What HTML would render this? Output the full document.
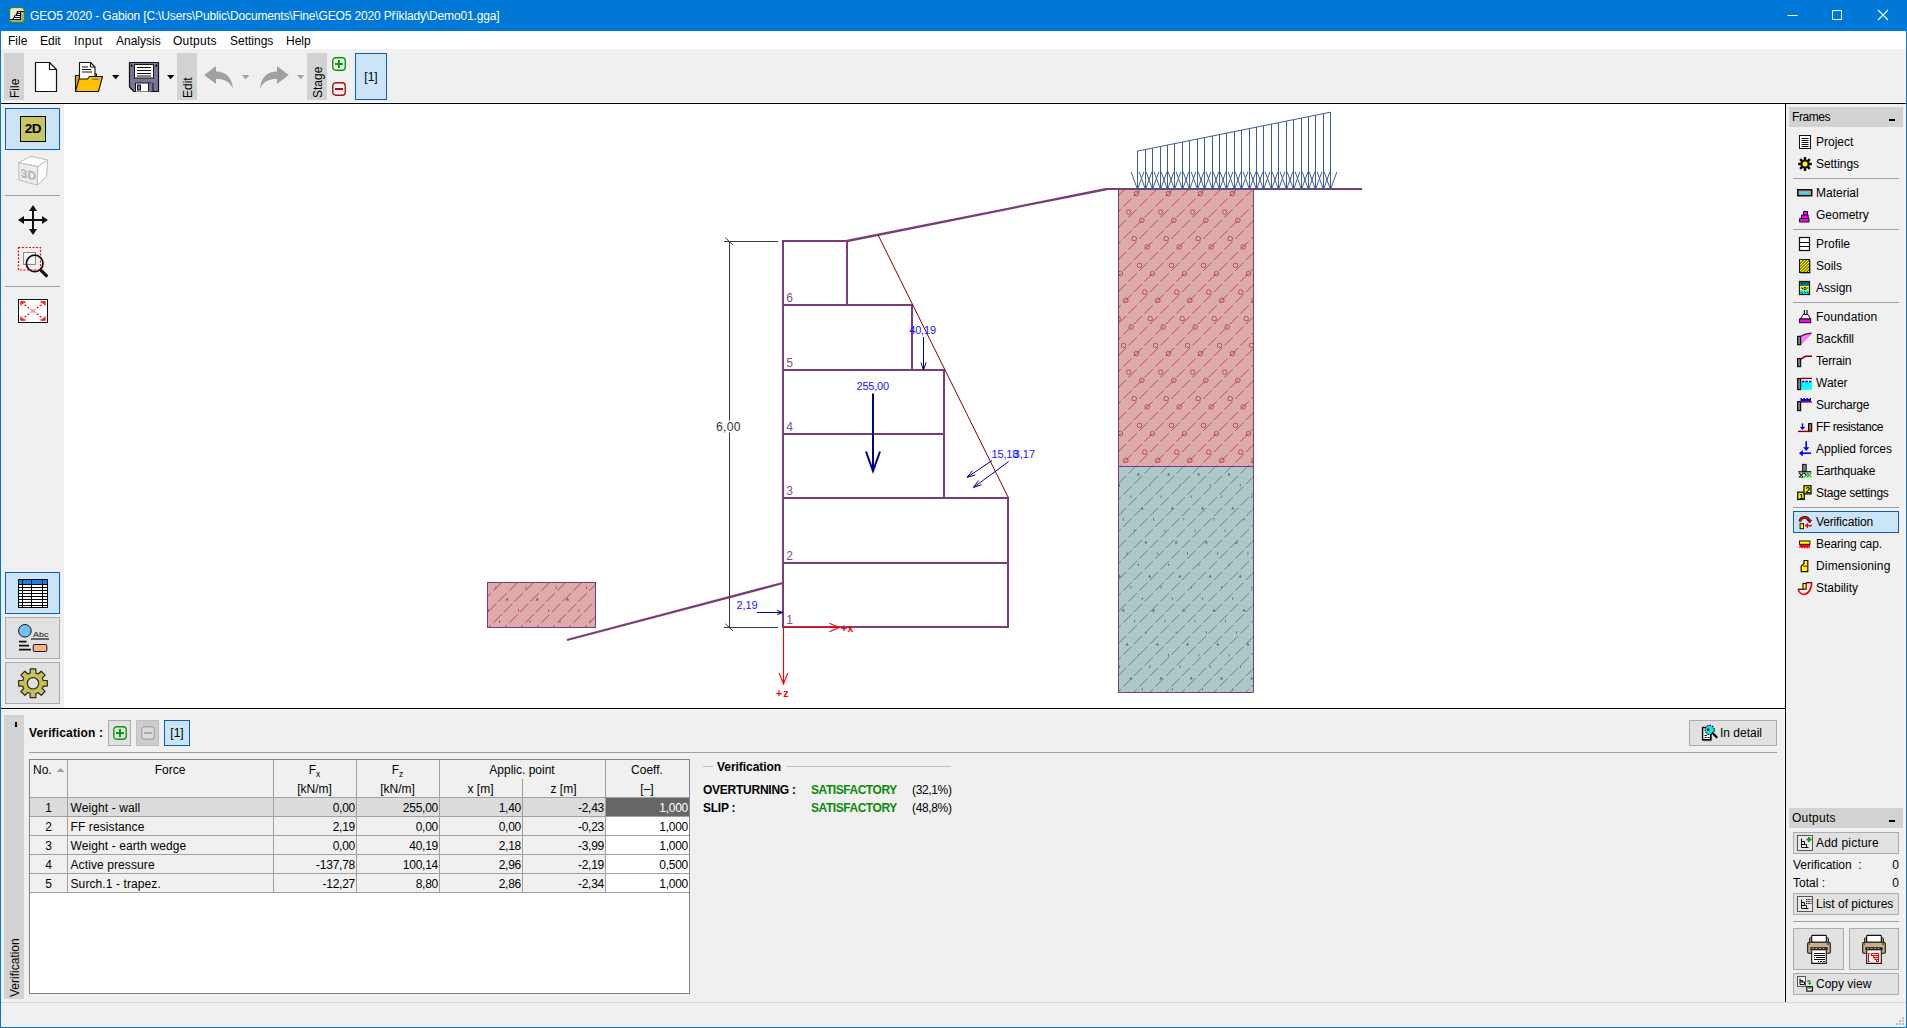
<!DOCTYPE html>
<html lang="en">
<head>
<meta charset="utf-8">
<title>GEO5 2020 - Gabion</title>
<style>
*{box-sizing:border-box;margin:0;padding:0}
html,body{width:1907px;height:1028px;overflow:hidden;background:#f0f0f0}
body{position:relative;font-family:"Liberation Sans",sans-serif;font-size:12px;color:#000;line-height:14px}
.a{position:absolute}
.t{position:absolute;white-space:nowrap;line-height:14px;height:14px}
.vstrip{position:absolute;background:#d2d2d2}
.vtxt{position:absolute;white-space:nowrap;transform-origin:0 0;transform:rotate(-90deg);line-height:14px;height:14px}
.btn{position:absolute;background:#e1e1e1;border:1px solid #adadad}
.sel{position:absolute;background:#cce4f7;border:1px solid #0f5fae}
.sep{position:absolute;height:1px;background:#a0a0a0}
.b{font-weight:bold}
svg{position:absolute;overflow:visible}
</style>
</head>
<body>
<!-- window frame -->
<div class="a" style="left:0;top:0;width:1907px;height:31px;background:#0078d7"></div>
<div class="a" style="left:0;top:31px;width:1907px;height:18px;background:#fff"></div>
<div class="a" style="left:0;top:103px;width:1907px;height:1px;background:#000"></div>
<div class="a" style="left:64px;top:104px;width:1721px;height:604px;background:#fff"></div>
<div class="a" style="left:0;top:708px;width:1786px;height:1px;background:#000"></div>
<div class="a" style="left:1785px;top:104px;width:1px;height:898px;background:#000"></div>
<div class="a" style="left:0;top:1002px;width:1907px;height:1px;background:#d7d7d7"></div>
<div class="a" style="left:0;top:0;width:1px;height:1028px;background:#0078d7"></div>
<div class="a" style="left:1906px;top:0;width:1px;height:1028px;background:#0078d7"></div>
<div class="a" style="left:0;top:1027px;width:1907px;height:1px;background:#0078d7"></div>

<div class="a" style="left:1px;top:102px;width:1905px;height:1px;background:#fbfbfb"></div>
<div class="a" style="left:1px;top:709px;width:1784px;height:1px;background:#fbfbfb"></div>
<div class="a" style="left:1784px;top:709px;width:1px;height:293px;background:#fbfbfb"></div>
<!-- title bar -->
<svg style="left:9px;top:7px" width="16" height="16" viewBox="0 0 16 16">
<rect x="0.500" y="0.500" width="15" height="15" rx="3.200" fill="#a9b263" stroke="#3f7a1c"/>
<path d="M1.300 3.500Q1.300 1.300 3.500 1.300H12.500Q14.200 1.300 14.600 4H8L4 12.200H1.300z" fill="#e9ebd8"/>
<path d="M8 4h7v1h-3v8H1v-1h3v-1.500h1v-2h2v-2h1z" fill="#000"/>
<path d="M9.200 5.500h1.800M8.200 7.500h2.800M6.200 9.500h4.800M5 11.500h6" stroke="#fff" stroke-width="1.100"/>
</svg>
<div class="t" style="left:30px;top:9px;color:#fff;letter-spacing:-0.15px">GEO5 2020 - Gabion [C:\Users\Public\Documents\Fine\GEO5 2020 Příklady\Demo01.gga]</div>
<svg style="left:1780px;top:0" width="127" height="31" viewBox="0 0 127 31">
<path d="M7.5 15.5h10" stroke="#fff" stroke-width="1" fill="none"/>
<rect x="52.5" y="10.5" width="9" height="9" stroke="#fff" stroke-width="1" fill="none"/>
<path d="M98 10l10 10M108 10l-10 10" stroke="#fff" stroke-width="1.1" fill="none"/>
</svg>

<!-- menu bar -->
<div class="t" style="left:8px;top:34px">File</div>
<div class="t" style="left:40px;top:34px">Edit</div>
<div class="t" style="left:74px;top:34px;letter-spacing:0.350px">Input</div>
<div class="t" style="left:116px;top:34px">Analysis</div>
<div class="t" style="left:173px;top:34px;letter-spacing:0.250px">Outputs</div>
<div class="t" style="left:230px;top:34px">Settings</div>
<div class="t" style="left:286px;top:34px">Help</div>
<!-- toolbar -->
<div class="vstrip" style="left:4px;top:53px;width:20px;height:47px"></div>
<div class="vtxt" style="left:7.600px;top:98px">File</div>
<div class="vstrip" style="left:177px;top:53px;width:20px;height:47px"></div>
<div class="vtxt" style="left:180.600px;top:98px">Edit</div>
<div class="vstrip" style="left:307px;top:53px;width:20px;height:47px"></div>
<div class="vtxt" style="left:310.500px;top:98px">Stage</div>
<!-- new -->
<svg style="left:34px;top:61px" width="25" height="32" viewBox="0 0 25 32">
<path d="M1.5 1.5h14l7 7v22h-21z" fill="#fff" stroke="#111" stroke-width="1.2" stroke-linejoin="round"/>
<path d="M15.5 1.5v7h7" fill="none" stroke="#111" stroke-width="1.2" stroke-linejoin="round"/>
</svg>
<!-- open -->
<svg style="left:74px;top:61px" width="30" height="32" viewBox="0 0 30 32">
<path d="M1.5 30.5v-16h4l1-1.5h16v4" fill="#e9a800" stroke="#111" stroke-width="1.1" stroke-linejoin="round"/>
<path d="M5.5 24v-22.500h11l4.500 4.500v14z" fill="#fff" stroke="#111" stroke-width="1.1" stroke-linejoin="round"/>
<path d="M16.500 1.500v4.500h4.500" fill="none" stroke="#111" stroke-width="1"/>
<path d="M8 6h6M8 8.500h9M8 11h10" stroke="#111" stroke-width="1.1"/>
<path d="M1.500 30.500l3.500-12.500h8.500l2-2.500h13l-4 15z" fill="#ffc000" stroke="#111" stroke-width="1.100" stroke-linejoin="round"/>
<rect x="18" y="17.500" width="6.500" height="1.600" fill="#7a7a9a"/>
</svg>

<svg style="left:111px;top:74px" width="10" height="6" viewBox="0 0 10 6"><path d="M1 1h7.400l-3.700 4.300z" fill="#000"/></svg>
<!-- save -->
<svg style="left:128px;top:61px" width="32" height="32" viewBox="0 0 32 32">
<path d="M1.500 1.500h29v29h-24.500l-4.500-4.500z" fill="#77769a" stroke="#111" stroke-width="1.200" stroke-linejoin="round"/>
<rect x="6.500" y="3.500" width="19" height="13.500" fill="#fff" stroke="#111" stroke-width="1"/>
<path d="M9 6.500h14M9 9.500h14M9 12.500h14M9 15h14" stroke="#111" stroke-width="1"/>
<rect x="3" y="3.500" width="1.500" height="2.500" fill="#111"/><rect x="27.500" y="3.500" width="1.500" height="2.500" fill="#111"/>
<path d="M7.500 30.500v-8.500h15.500v8.500" fill="#fff" stroke="#111" stroke-width="1"/>
<rect x="9.500" y="24" width="3" height="5" fill="#77769a" stroke="#111" stroke-width="1"/>
<path d="M20.500 22v8.500" stroke="#111" stroke-width="1"/>
<rect x="21" y="22.500" width="3.500" height="7.500" fill="#77769a"/>
<path d="M25 22v8.500" stroke="#111" stroke-width="1"/>
</svg>
<svg style="left:166px;top:74px" width="10" height="6" viewBox="0 0 10 6"><path d="M1 1h7.400l-3.700 4.300z" fill="#000"/></svg>
<!-- undo / redo -->
<svg style="left:203px;top:65px" width="32" height="26" viewBox="0 0 32 26">
<path d="M1.200 10 13 1v5.600c9 0 16 5 17 17.400c-3-7.500-8.500-10-17-10v5z" fill="#a0a0a0"/>
</svg>
<svg style="left:241px;top:74px" width="10" height="6" viewBox="0 0 10 6"><path d="M1 1h7.400l-3.700 4.300z" fill="#a0a0a0"/></svg>
<svg style="left:258px;top:65px" width="32" height="26" viewBox="0 0 32 26">
<path d="M30.800 10 19 1v5.600c-9 0-16 5-17 17.400c3-7.500 8.500-10 17-10v5z" fill="#a0a0a0"/>
</svg>
<svg style="left:296px;top:74px" width="10" height="6" viewBox="0 0 10 6"><path d="M1 1h7.400l-3.700 4.300z" fill="#a0a0a0"/></svg>
<!-- stage +/- -->
<svg style="left:332px;top:57px" width="14" height="14" viewBox="0 0 14 14">
<rect x="0.750" y="0.750" width="12.500" height="12.500" rx="3" fill="none" stroke="#0a9a0a" stroke-width="1.400"/>
<path d="M3 7h8M7 3v8" stroke="#0a9a0a" stroke-width="2"/>
</svg>
<svg style="left:332px;top:82px" width="14" height="14" viewBox="0 0 14 14">
<rect x="0.750" y="0.750" width="12.500" height="12.500" rx="3" fill="none" stroke="#a01414" stroke-width="1.400"/>
<path d="M3 7h8" stroke="#a01414" stroke-width="2"/>
</svg>
<div class="sel" style="left:355px;top:53px;width:32px;height:47px;border-width:1.500px"></div>
<div class="t" style="left:355px;top:70px;width:32px;text-align:center">[1]</div>
<!-- left tools -->
<div class="sel" style="left:5px;top:108px;width:55px;height:42px"></div>
<div class="a" style="left:20px;top:116px;width:26px;height:26px;background:#c8c862;border:1px solid #000"></div>
<div class="t b" style="left:20px;top:122px;width:26px;text-align:center;font-size:13.500px;letter-spacing:-0.300px">2D</div>
<svg style="left:14px;top:152px" width="38" height="38" viewBox="14 152 38 38">
<path d="M18.700 162.800 30.800 156.300 47.600 160 37.800 166.500z" fill="#fff" stroke="#bdbdbd" stroke-width="1" stroke-linejoin="round"/>
<path d="M37.800 166.500 47.600 160 46.700 176.300 37.300 185.200z" fill="#fff" stroke="#bdbdbd" stroke-width="1" stroke-linejoin="round"/>
<path d="M18.700 162.800 37.800 166.500 37.300 185.200 19.100 180z" fill="#ececec" stroke="#bdbdbd" stroke-width="1" stroke-linejoin="round"/>
<text x="20.800" y="178" font-size="12" font-weight="bold" fill="#b2b2b2" transform="translate(0,0) skewY(13) translate(0,-5.800)" font-family="Liberation Sans,sans-serif">3D</text>
</svg>
<div class="sep" style="left:5px;top:195px;width:55px"></div>
<svg style="left:18px;top:205px" width="30" height="30" viewBox="0 0 30 30">
<path d="M15 3v24M3 15h24" stroke="#111" stroke-width="2" fill="none"/>
<path d="M15 0l4 6h-8zM15 30l4-6h-8zM0 15l6-4v8zM30 15l-6-4v8z" fill="#111"/>
</svg>
<svg style="left:17px;top:246px" width="34" height="34" viewBox="17 246 34 34">
<rect x="23.500" y="252.500" width="12" height="12" fill="#f4f4f4" stroke="#8c8c8c" stroke-width="1"/>
<rect x="18.500" y="247.500" width="22" height="22.500" fill="none" stroke="#f00" stroke-width="1.200" stroke-dasharray="2 1.500"/>
<circle cx="34.700" cy="263.400" r="8.300" fill="none" stroke="#111" stroke-width="1.700"/>
<path d="M41 270.300 46.400 275.600" stroke="#111" stroke-width="3.200" stroke-linecap="round"/>
</svg>
<div class="sep" style="left:5px;top:286px;width:55px"></div>
<svg style="left:18px;top:299px" width="30" height="24" viewBox="0 0 30 24">
<rect x="0.500" y="0.500" width="29" height="23" fill="#fff" stroke="#111" stroke-width="1"/>
<path d="M3.500 3.500 13 10.600M26.500 3.500 17 10.600M3.500 20.500 13 13.400M26.500 20.500 17 13.400" stroke="#f00" stroke-width="1.200" stroke-dasharray="2.200 1.600" fill="none"/>
<path d="M3 6.500V3h4.500M27 6.500V3h-4.500M3 17.500V21h4.500M27 17.500V21h-4.500" stroke="#f00" stroke-width="1.300" fill="none"/>
<path d="M14 10.500v3M16 10.500v3" stroke="#f00" stroke-width="0.800"/>
</svg>
<!-- bottom-left buttons -->
<div class="sel" style="left:5px;top:572px;width:55px;height:42px"></div>
<svg style="left:18px;top:579px" width="30" height="29" viewBox="0 0 30 29" shape-rendering="crispEdges">
<rect x="0" y="0" width="30" height="29" fill="#000"/>
<rect x="1" y="1" width="28" height="27" fill="#fff"/>
<rect x="1" y="1" width="28" height="4" fill="#1284e8"/>
<path d="M0 5.500h30M0 8.500h30M0 11.500h30M0 14.500h30M0 17.500h30M0 20.500h30M0 23.500h30M0 26.500h30" stroke="#000" stroke-width="1"/>
<path d="M4.500 0v29M13.500 0v29M24.500 0v29" stroke="#000" stroke-width="1"/>
</svg>
<div class="btn" style="left:5px;top:617px;width:55px;height:42px"></div>
<svg style="left:16px;top:622px" width="36" height="32" viewBox="16 622 36 32">
<circle cx="24.900" cy="630.800" r="6.300" fill="#72c2fa" stroke="#111" stroke-width="1"/>
<text x="33" y="637" font-size="7.500" fill="#111" font-family="Liberation Sans,sans-serif" textLength="15.500" lengthAdjust="spacingAndGlyphs">Abc</text>
<path d="M31 639h18" stroke="#111" stroke-width="1.200"/>
<path d="M19 641.600h7.500M19 645.700h10M19 649.600h12" stroke="#111" stroke-width="1.700"/>
<rect x="33.300" y="644.500" width="13.500" height="7" rx="1" fill="#ffb27e" stroke="#111" stroke-width="1"/>
</svg>
<div class="btn" style="left:5px;top:662px;width:55px;height:42px"></div>
<svg style="left:5px;top:662px" width="55" height="42" viewBox="0 0 55 42">
<path d="M25.11 11.10L25.21 6.97L30.79 6.97L30.89 11.10L33.17 12.05L36.16 9.20L40.10 13.14L37.25 16.13L38.20 18.41L42.33 18.51L42.33 24.09L38.20 24.19L37.25 26.47L40.10 29.46L36.16 33.40L33.17 30.55L30.89 31.50L30.79 35.63L25.21 35.63L25.11 31.50L22.83 30.55L19.84 33.40L15.90 29.46L18.75 26.47L17.80 24.19L13.67 24.09L13.67 18.51L17.80 18.41L18.75 16.13L15.90 13.14L19.84 9.20L22.83 12.05Z" fill="#c3c355" stroke="#2a2a2a" stroke-width="1.200" stroke-linejoin="round"/>
<circle cx="28" cy="21.300" r="5.700" fill="#e1e1e1" stroke="#2a2a2a" stroke-width="1.200"/>
</svg>
<!-- canvas drawing -->
<svg style="left:64px;top:104px" width="1721" height="604" viewBox="64 104 1721 604" font-family="Liberation Sans,sans-serif">
<defs>
<clipPath id="cpink"><rect x="1118.5" y="190" width="135" height="276.5"/></clipPath>
<clipPath id="cteal"><rect x="1118.5" y="466.5" width="135" height="226"/></clipPath>
<clipPath id="cleg"><rect x="487.5" y="582.5" width="108" height="45"/></clipPath>
</defs>
<rect x="1118.5" y="189.5" width="135" height="277" fill="#ddabab"/>
<rect x="1118.5" y="466.5" width="135" height="226" fill="#aec8c8"/>
<g clip-path="url(#cpink)"><g stroke="#b84444" stroke-width="0.9" stroke-dasharray="11.8 3.28" fill="none"><line x1="813.1" y1="469.0" x2="1095.1" y2="187.0" stroke-dashoffset="6.35"/><line x1="829.1" y1="469.0" x2="1111.1" y2="187.0" stroke-dashoffset="6.35"/><line x1="845.1" y1="469.0" x2="1127.1" y2="187.0" stroke-dashoffset="6.35"/><line x1="861.1" y1="469.0" x2="1143.1" y2="187.0" stroke-dashoffset="6.35"/><line x1="877.1" y1="469.0" x2="1159.1" y2="187.0" stroke-dashoffset="6.35"/><line x1="893.1" y1="469.0" x2="1175.1" y2="187.0" stroke-dashoffset="6.35"/><line x1="909.1" y1="469.0" x2="1191.1" y2="187.0" stroke-dashoffset="6.35"/><line x1="925.1" y1="469.0" x2="1207.1" y2="187.0" stroke-dashoffset="6.35"/><line x1="941.1" y1="469.0" x2="1223.1" y2="187.0" stroke-dashoffset="6.35"/><line x1="957.1" y1="469.0" x2="1239.1" y2="187.0" stroke-dashoffset="6.35"/><line x1="973.1" y1="469.0" x2="1255.1" y2="187.0" stroke-dashoffset="6.35"/><line x1="989.1" y1="469.0" x2="1271.1" y2="187.0" stroke-dashoffset="6.35"/><line x1="1005.1" y1="469.0" x2="1287.1" y2="187.0" stroke-dashoffset="6.35"/><line x1="1021.1" y1="469.0" x2="1303.1" y2="187.0" stroke-dashoffset="6.35"/><line x1="1037.1" y1="469.0" x2="1319.1" y2="187.0" stroke-dashoffset="6.35"/><line x1="1053.1" y1="469.0" x2="1335.1" y2="187.0" stroke-dashoffset="6.35"/><line x1="1069.1" y1="469.0" x2="1351.1" y2="187.0" stroke-dashoffset="6.35"/><line x1="1085.1" y1="469.0" x2="1367.1" y2="187.0" stroke-dashoffset="6.35"/><line x1="1101.1" y1="469.0" x2="1383.1" y2="187.0" stroke-dashoffset="6.35"/><line x1="1117.1" y1="469.0" x2="1399.1" y2="187.0" stroke-dashoffset="6.35"/><line x1="1133.1" y1="469.0" x2="1415.1" y2="187.0" stroke-dashoffset="6.35"/><line x1="1149.1" y1="469.0" x2="1431.1" y2="187.0" stroke-dashoffset="6.35"/><line x1="1165.1" y1="469.0" x2="1447.1" y2="187.0" stroke-dashoffset="6.35"/><line x1="1181.1" y1="469.0" x2="1463.1" y2="187.0" stroke-dashoffset="6.35"/><line x1="1197.1" y1="469.0" x2="1479.1" y2="187.0" stroke-dashoffset="6.35"/><line x1="1213.1" y1="469.0" x2="1495.1" y2="187.0" stroke-dashoffset="6.35"/><line x1="1229.1" y1="469.0" x2="1511.1" y2="187.0" stroke-dashoffset="6.35"/><line x1="1245.1" y1="469.0" x2="1527.1" y2="187.0" stroke-dashoffset="6.35"/><line x1="1261.1" y1="469.0" x2="1543.1" y2="187.0" stroke-dashoffset="6.35"/><line x1="1277.1" y1="469.0" x2="1559.1" y2="187.0" stroke-dashoffset="6.35"/></g><g stroke="#b84444" stroke-width="0.900" fill="none"><circle cx="1136.5" cy="193.6" r="2.3"/><circle cx="1168.5" cy="193.6" r="2.3"/><circle cx="1200.5" cy="193.6" r="2.3"/><circle cx="1232.5" cy="193.6" r="2.3"/><circle cx="1141.8" cy="220.3" r="2.3"/><circle cx="1173.8" cy="220.3" r="2.3"/><circle cx="1205.8" cy="220.3" r="2.3"/><circle cx="1237.8" cy="220.3" r="2.3"/><circle cx="1115.2" cy="246.9" r="2.3"/><circle cx="1147.2" cy="246.9" r="2.3"/><circle cx="1179.2" cy="246.9" r="2.3"/><circle cx="1211.2" cy="246.9" r="2.3"/><circle cx="1243.2" cy="246.9" r="2.3"/><circle cx="1120.5" cy="273.6" r="2.3"/><circle cx="1152.5" cy="273.6" r="2.3"/><circle cx="1184.5" cy="273.6" r="2.3"/><circle cx="1216.5" cy="273.6" r="2.3"/><circle cx="1248.5" cy="273.6" r="2.3"/><circle cx="1125.8" cy="300.3" r="2.3"/><circle cx="1157.8" cy="300.3" r="2.3"/><circle cx="1189.8" cy="300.3" r="2.3"/><circle cx="1221.8" cy="300.3" r="2.3"/><circle cx="1253.8" cy="300.3" r="2.3"/><circle cx="1131.2" cy="326.9" r="2.3"/><circle cx="1163.2" cy="326.9" r="2.3"/><circle cx="1195.2" cy="326.9" r="2.3"/><circle cx="1227.2" cy="326.9" r="2.3"/><circle cx="1136.5" cy="353.6" r="2.3"/><circle cx="1168.5" cy="353.6" r="2.3"/><circle cx="1200.5" cy="353.6" r="2.3"/><circle cx="1232.5" cy="353.6" r="2.3"/><circle cx="1141.8" cy="380.3" r="2.3"/><circle cx="1173.8" cy="380.3" r="2.3"/><circle cx="1205.8" cy="380.3" r="2.3"/><circle cx="1237.8" cy="380.3" r="2.3"/><circle cx="1115.2" cy="406.9" r="2.3"/><circle cx="1147.2" cy="406.9" r="2.3"/><circle cx="1179.2" cy="406.9" r="2.3"/><circle cx="1211.2" cy="406.9" r="2.3"/><circle cx="1243.2" cy="406.9" r="2.3"/><circle cx="1120.5" cy="433.6" r="2.3"/><circle cx="1152.5" cy="433.6" r="2.3"/><circle cx="1184.5" cy="433.6" r="2.3"/><circle cx="1216.5" cy="433.6" r="2.3"/><circle cx="1248.5" cy="433.6" r="2.3"/><circle cx="1125.8" cy="460.3" r="2.3"/><circle cx="1157.8" cy="460.3" r="2.3"/><circle cx="1189.8" cy="460.3" r="2.3"/><circle cx="1221.8" cy="460.3" r="2.3"/><circle cx="1253.8" cy="460.3" r="2.3"/><circle cx="1128.8" cy="212.1" r="2.3"/><circle cx="1160.8" cy="212.1" r="2.3"/><circle cx="1192.8" cy="212.1" r="2.3"/><circle cx="1224.8" cy="212.1" r="2.3"/><circle cx="1256.8" cy="212.1" r="2.3"/><circle cx="1134.2" cy="238.7" r="2.3"/><circle cx="1166.2" cy="238.7" r="2.3"/><circle cx="1198.2" cy="238.7" r="2.3"/><circle cx="1230.2" cy="238.7" r="2.3"/><circle cx="1139.5" cy="265.4" r="2.3"/><circle cx="1171.5" cy="265.4" r="2.3"/><circle cx="1203.5" cy="265.4" r="2.3"/><circle cx="1235.5" cy="265.4" r="2.3"/><circle cx="1144.8" cy="292.1" r="2.3"/><circle cx="1176.8" cy="292.1" r="2.3"/><circle cx="1208.8" cy="292.1" r="2.3"/><circle cx="1240.8" cy="292.1" r="2.3"/><circle cx="1118.2" cy="318.7" r="2.3"/><circle cx="1150.2" cy="318.7" r="2.3"/><circle cx="1182.2" cy="318.7" r="2.3"/><circle cx="1214.2" cy="318.7" r="2.3"/><circle cx="1246.2" cy="318.7" r="2.3"/><circle cx="1123.5" cy="345.4" r="2.3"/><circle cx="1155.5" cy="345.4" r="2.3"/><circle cx="1187.5" cy="345.4" r="2.3"/><circle cx="1219.5" cy="345.4" r="2.3"/><circle cx="1251.5" cy="345.4" r="2.3"/><circle cx="1128.8" cy="372.1" r="2.3"/><circle cx="1160.8" cy="372.1" r="2.3"/><circle cx="1192.8" cy="372.1" r="2.3"/><circle cx="1224.8" cy="372.1" r="2.3"/><circle cx="1256.8" cy="372.1" r="2.3"/><circle cx="1134.2" cy="398.7" r="2.3"/><circle cx="1166.2" cy="398.7" r="2.3"/><circle cx="1198.2" cy="398.7" r="2.3"/><circle cx="1230.2" cy="398.7" r="2.3"/><circle cx="1139.5" cy="425.4" r="2.3"/><circle cx="1171.5" cy="425.4" r="2.3"/><circle cx="1203.5" cy="425.4" r="2.3"/><circle cx="1235.5" cy="425.4" r="2.3"/><circle cx="1144.8" cy="452.1" r="2.3"/><circle cx="1176.8" cy="452.1" r="2.3"/><circle cx="1208.8" cy="452.1" r="2.3"/><circle cx="1240.8" cy="452.1" r="2.3"/></g></g>
<g clip-path="url(#cteal)"><g stroke="#448484" stroke-width="0.9" stroke-dasharray="11.8 3.28" fill="none"><line x1="859.1" y1="695.0" x2="1090.1" y2="464.0" stroke-dashoffset="3.42"/><line x1="875.1" y1="695.0" x2="1106.1" y2="464.0" stroke-dashoffset="3.42"/><line x1="891.1" y1="695.0" x2="1122.1" y2="464.0" stroke-dashoffset="3.42"/><line x1="907.1" y1="695.0" x2="1138.1" y2="464.0" stroke-dashoffset="3.42"/><line x1="923.1" y1="695.0" x2="1154.1" y2="464.0" stroke-dashoffset="3.42"/><line x1="939.1" y1="695.0" x2="1170.1" y2="464.0" stroke-dashoffset="3.42"/><line x1="955.1" y1="695.0" x2="1186.1" y2="464.0" stroke-dashoffset="3.42"/><line x1="971.1" y1="695.0" x2="1202.1" y2="464.0" stroke-dashoffset="3.42"/><line x1="987.1" y1="695.0" x2="1218.1" y2="464.0" stroke-dashoffset="3.42"/><line x1="1003.1" y1="695.0" x2="1234.1" y2="464.0" stroke-dashoffset="3.42"/><line x1="1019.1" y1="695.0" x2="1250.1" y2="464.0" stroke-dashoffset="3.42"/><line x1="1035.1" y1="695.0" x2="1266.1" y2="464.0" stroke-dashoffset="3.42"/><line x1="1051.1" y1="695.0" x2="1282.1" y2="464.0" stroke-dashoffset="3.42"/><line x1="1067.1" y1="695.0" x2="1298.1" y2="464.0" stroke-dashoffset="3.42"/><line x1="1083.1" y1="695.0" x2="1314.1" y2="464.0" stroke-dashoffset="3.42"/><line x1="1099.1" y1="695.0" x2="1330.1" y2="464.0" stroke-dashoffset="3.42"/><line x1="1115.1" y1="695.0" x2="1346.1" y2="464.0" stroke-dashoffset="3.42"/><line x1="1131.1" y1="695.0" x2="1362.1" y2="464.0" stroke-dashoffset="3.42"/><line x1="1147.1" y1="695.0" x2="1378.1" y2="464.0" stroke-dashoffset="3.42"/><line x1="1163.1" y1="695.0" x2="1394.1" y2="464.0" stroke-dashoffset="3.42"/><line x1="1179.1" y1="695.0" x2="1410.1" y2="464.0" stroke-dashoffset="3.42"/><line x1="1195.1" y1="695.0" x2="1426.1" y2="464.0" stroke-dashoffset="3.42"/><line x1="1211.1" y1="695.0" x2="1442.1" y2="464.0" stroke-dashoffset="3.42"/><line x1="1227.1" y1="695.0" x2="1458.1" y2="464.0" stroke-dashoffset="3.42"/><line x1="1243.1" y1="695.0" x2="1474.1" y2="464.0" stroke-dashoffset="3.42"/><line x1="1259.1" y1="695.0" x2="1490.1" y2="464.0" stroke-dashoffset="3.42"/><line x1="1275.1" y1="695.0" x2="1506.1" y2="464.0" stroke-dashoffset="3.42"/></g><path d="M1119.5 484.2v2.4M1149.7 484.2v2.4M1179.9 484.2v2.4M1210.1 484.2v2.4M1240.3 484.2v2.4M1130.8 495.5v2.4M1161.0 495.5v2.4M1191.2 495.5v2.4M1221.4 495.5v2.4M1251.6 495.5v2.4M1123.3 518.2v2.4M1153.5 518.2v2.4M1183.7 518.2v2.4M1213.9 518.2v2.4M1244.1 518.2v2.4M1134.6 529.5v2.4M1164.8 529.5v2.4M1195.0 529.5v2.4M1225.2 529.5v2.4M1255.4 529.5v2.4M1127.1 552.2v2.4M1157.3 552.2v2.4M1187.5 552.2v2.4M1217.7 552.2v2.4M1247.9 552.2v2.4M1138.4 563.5v2.4M1168.6 563.5v2.4M1198.8 563.5v2.4M1229.0 563.5v2.4M1130.9 586.2v2.4M1161.1 586.2v2.4M1191.3 586.2v2.4M1221.5 586.2v2.4M1251.7 586.2v2.4M1142.2 597.5v2.4M1172.4 597.5v2.4M1202.6 597.5v2.4M1232.8 597.5v2.4M1134.7 620.1v2.4M1164.9 620.1v2.4M1195.1 620.1v2.4M1225.3 620.1v2.4M1255.5 620.1v2.4M1115.8 631.5v2.4M1146.0 631.5v2.4M1176.2 631.5v2.4M1206.4 631.5v2.4M1236.6 631.5v2.4M1138.4 654.1v2.4M1168.6 654.1v2.4M1198.8 654.1v2.4M1229.0 654.1v2.4M1119.6 665.5v2.4M1149.8 665.5v2.4M1180.0 665.5v2.4M1210.2 665.5v2.4M1240.4 665.5v2.4M1142.2 688.1v2.4M1172.4 688.1v2.4M1202.6 688.1v2.4M1232.8 688.1v2.4" stroke="#448484" stroke-width="1" fill="none"/><path d="M1136.8 475.5h3.2l-1.6 -3zM1167.0 475.5h3.2l-1.6 -3zM1197.2 475.5h3.2l-1.6 -3zM1227.4 475.5h3.2l-1.6 -3zM1140.6 509.4h3.2l-1.6 -3zM1170.8 509.4h3.2l-1.6 -3zM1201.0 509.4h3.2l-1.6 -3zM1231.2 509.4h3.2l-1.6 -3zM1114.1 543.4h3.2l-1.6 -3zM1144.3 543.4h3.2l-1.6 -3zM1174.5 543.4h3.2l-1.6 -3zM1204.7 543.4h3.2l-1.6 -3zM1234.9 543.4h3.2l-1.6 -3zM1117.9 577.4h3.2l-1.6 -3zM1148.1 577.4h3.2l-1.6 -3zM1178.3 577.4h3.2l-1.6 -3zM1208.5 577.4h3.2l-1.6 -3zM1238.7 577.4h3.2l-1.6 -3zM1121.7 611.4h3.2l-1.6 -3zM1151.9 611.4h3.2l-1.6 -3zM1182.1 611.4h3.2l-1.6 -3zM1212.3 611.4h3.2l-1.6 -3zM1242.5 611.4h3.2l-1.6 -3zM1125.5 645.4h3.2l-1.6 -3zM1155.7 645.4h3.2l-1.6 -3zM1185.9 645.4h3.2l-1.6 -3zM1216.1 645.4h3.2l-1.6 -3zM1246.3 645.4h3.2l-1.6 -3zM1129.3 679.4h3.2l-1.6 -3zM1159.5 679.4h3.2l-1.6 -3zM1189.7 679.4h3.2l-1.6 -3zM1219.9 679.4h3.2l-1.6 -3zM1250.1 679.4h3.2l-1.6 -3z" fill="#448484" stroke="none"/></g>
<path d="M1118.5 189.5V692.5H1253.5V189.5M1118.5 466.5H1253.5" fill="none" stroke="#7a3d7c" stroke-width="1"/>
<rect x="487.5" y="582.5" width="108" height="45" fill="#ddabab"/>
<g clip-path="url(#cleg)"><g stroke="#b84444" stroke-width="0.9" stroke-dasharray="11.8 3.28" fill="none"><line x1="422.1" y1="630.0" x2="472.1" y2="580.0" stroke-dashoffset="4.86"/><line x1="438.1" y1="630.0" x2="488.1" y2="580.0" stroke-dashoffset="4.86"/><line x1="454.1" y1="630.0" x2="504.1" y2="580.0" stroke-dashoffset="4.86"/><line x1="470.1" y1="630.0" x2="520.1" y2="580.0" stroke-dashoffset="4.86"/><line x1="486.1" y1="630.0" x2="536.1" y2="580.0" stroke-dashoffset="4.86"/><line x1="502.1" y1="630.0" x2="552.1" y2="580.0" stroke-dashoffset="4.86"/><line x1="518.1" y1="630.0" x2="568.1" y2="580.0" stroke-dashoffset="4.86"/><line x1="534.1" y1="630.0" x2="584.1" y2="580.0" stroke-dashoffset="4.86"/><line x1="550.1" y1="630.0" x2="600.1" y2="580.0" stroke-dashoffset="4.86"/><line x1="566.1" y1="630.0" x2="616.1" y2="580.0" stroke-dashoffset="4.86"/><line x1="582.1" y1="630.0" x2="632.1" y2="580.0" stroke-dashoffset="4.86"/><line x1="598.1" y1="630.0" x2="648.1" y2="580.0" stroke-dashoffset="4.86"/><line x1="614.1" y1="630.0" x2="664.1" y2="580.0" stroke-dashoffset="4.86"/></g><path d="M495.8 586.5v2.4M526.0 586.5v2.4M556.2 586.5v2.4M586.4 586.5v2.4M488.3 609.2v2.4M518.5 609.2v2.4M548.7 609.2v2.4M578.9 609.2v2.4M499.6 620.5v2.4M529.8 620.5v2.4M560.0 620.5v2.4M590.2 620.5v2.4" stroke="#b84444" stroke-width="1" fill="none"/><path d="M505.5 600.4h3.2l-1.6 -3zM535.7 600.4h3.2l-1.6 -3zM565.9 600.4h3.2l-1.6 -3zM596.1 600.4h3.2l-1.6 -3z" fill="#b84444" stroke="none"/></g>
<rect x="487.5" y="582.5" width="108" height="45" fill="none" stroke="#7a3d7c" stroke-width="1"/>
<path d="M567 640 783 583" stroke="#7a3d7c" stroke-width="2.300" fill="none"/>
<path d="M847 241 1107 189" stroke="#7a3d7c" stroke-width="2.300" fill="none"/><path d="M1106 189H1362" stroke="#7a3d7c" stroke-width="2" fill="none"/>
<path d="M1137.5 151.1V189.5M1145.5 149.6V189.5M1152.5 148.1V189.5M1160.5 146.6V189.5M1167.5 145.1V189.5M1174.5 143.6V189.5M1182.5 142.1V189.5M1189.5 140.6V189.5M1197.5 139.1V189.5M1204.5 137.6V189.5M1212.5 136.1V189.5M1219.5 134.6V189.5M1226.5 133.1V189.5M1234.5 131.7V189.5M1241.5 130.2V189.5M1249.5 128.7V189.5M1256.5 127.2V189.5M1263.5 125.7V189.5M1271.5 124.2V189.5M1278.5 122.7V189.5M1286.5 121.2V189.5M1293.5 119.7V189.5M1301.5 118.2V189.5M1308.5 116.7V189.5M1315.5 115.2V189.5M1323.5 113.7V189.5M1330.5 112.2V189.5M1137.5 189.5H1330.5" stroke="#3f5c96" stroke-width="1" fill="none" shape-rendering="crispEdges"/>
<path d="M1131.10 171.80L1137.50 189.5L1143.90 171.80M1139.10 171.80L1145.50 189.5L1151.90 171.80M1146.10 171.80L1152.50 189.5L1158.90 171.80M1154.10 171.80L1160.50 189.5L1166.90 171.80M1161.10 171.80L1167.50 189.5L1173.90 171.80M1168.10 171.80L1174.50 189.5L1180.90 171.80M1176.10 171.80L1182.50 189.5L1188.90 171.80M1183.10 171.80L1189.50 189.5L1195.90 171.80M1191.10 171.80L1197.50 189.5L1203.90 171.80M1198.10 171.80L1204.50 189.5L1210.90 171.80M1206.10 171.80L1212.50 189.5L1218.90 171.80M1213.10 171.80L1219.50 189.5L1225.90 171.80M1220.10 171.80L1226.50 189.5L1232.90 171.80M1228.10 171.80L1234.50 189.5L1240.90 171.80M1235.10 171.80L1241.50 189.5L1247.90 171.80M1243.10 171.80L1249.50 189.5L1255.90 171.80M1250.10 171.80L1256.50 189.5L1262.90 171.80M1257.10 171.80L1263.50 189.5L1269.90 171.80M1265.10 171.80L1271.50 189.5L1277.90 171.80M1272.10 171.80L1278.50 189.5L1284.90 171.80M1280.10 171.80L1286.50 189.5L1292.90 171.80M1287.10 171.80L1293.50 189.5L1299.90 171.80M1295.10 171.80L1301.50 189.5L1307.90 171.80M1302.10 171.80L1308.50 189.5L1314.90 171.80M1309.10 171.80L1315.50 189.5L1321.90 171.80M1317.10 171.80L1323.50 189.5L1329.90 171.80M1324.10 171.80L1330.50 189.5L1336.90 171.80M1137.5 151.1L1330.5 112.2" stroke="#3f5c96" stroke-width="1" fill="none"/>
<path d="M783 241.0H847V305.0H783ZM783 305.0H912V370.0H783ZM783 370.0H944V434.0H783ZM783 434.0H944V498.0H783ZM783 498.0H1008V563.0H783ZM783 563.0H1008V627.0H783Z" stroke="#7a3d7c" stroke-width="2" fill="none" stroke-linejoin="miter"/>
<text x="786.3" y="301.8" font-size="12" fill="#7d4f8e">6</text>
<text x="786.3" y="366.8" font-size="12" fill="#7d4f8e">5</text>
<text x="786.3" y="430.8" font-size="12" fill="#7d4f8e">4</text>
<text x="786.3" y="494.8" font-size="12" fill="#7d4f8e">3</text>
<text x="786.3" y="559.8" font-size="12" fill="#7d4f8e">2</text>
<text x="786.3" y="623.8" font-size="12" fill="#7d4f8e">1</text>
<path d="M878 234.8 1008.5 498" stroke="#800000" stroke-width="1" fill="none"/>
<path d="M724 241.5H778M724 627.5H778M729.5 241.5V627.5M725.3 237.800l7.600 7M725.300 623.800l7.600 7" stroke="#3a3a3a" stroke-width="1" fill="none"/>
<rect x="715" y="420.500" width="27" height="12" fill="#fff"/>
<text x="716" y="431" font-size="12.200" fill="#333" textLength="24.500" lengthAdjust="spacing">6,00</text>
<path d="M783 627.500H840M829.500 623.200l9.700 4.300-9.700 4.300M783.500 627V684M779.100 673l4.400 11 4.400-11" stroke="#f00" stroke-width="1.100" fill="none"/>
<text x="841" y="632" font-size="10.500" font-weight="bold" fill="#f00" letter-spacing="0.300">+x</text>
<text x="776" y="696.500" font-size="10.500" font-weight="bold" fill="#f00" letter-spacing="1">+z</text>
<path d="M873 393.500V470M866 451.500 873 471 880 451.500" stroke="#000080" stroke-width="2" fill="none"/>
<path d="M923.500 337V370M921 362.500 923.500 370 926 362.500" stroke="#000080" stroke-width="1" fill="none"/>
<path d="M992 460.6L967.2 477.3M972.4 470.7L967.2 477.3L975.3 475.0M1008.6 461.6L973.5 487.4M978.4 480.6L973.5 487.4L981.5 484.8M757 612.5L783 612.5M777.0 614.5L783 612.5L777.0 610.5" stroke="#000080" stroke-width="1" fill="none"/>
<text x="856.6" y="389.9" font-size="11" fill="#1414ff" textLength="32.4" lengthAdjust="spacing">255,00</text>
<text x="909.3" y="333.7" font-size="11" fill="#1414ff" textLength="26.7" lengthAdjust="spacing">40,19</text>
<text x="991.6" y="457.5" font-size="11" fill="#1414ff" textLength="26.7" lengthAdjust="spacing">15,18</text>
<text x="1013.8" y="457.5" font-size="11" fill="#1414ff" textLength="21.2" lengthAdjust="spacing">3,17</text>
<text x="736.5" y="609" font-size="11" fill="#1414ff" textLength="21.2" lengthAdjust="spacing">2,19</text>
</svg>
<!-- bottom panel -->
<div class="vstrip" style="left:4px;top:715px;width:20px;height:284px"></div>
<div class="a" style="left:15px;top:722px;width:2px;height:5px;background:#000"></div>
<div class="vtxt" style="left:7.600px;top:996.500px">Verification</div>
<div class="t b" style="left:29px;top:726px;letter-spacing:0.150px">Verification :</div>
<div class="btn" style="left:108px;top:720px;width:23px;height:26px"></div>
<svg style="left:113px;top:726px" width="14" height="14" viewBox="0 0 14 14"><rect x="0.75" y="0.75" width="12.5" height="12.5" rx="3" fill="none" stroke="#0a9a0a" stroke-width="1.300"/><path d="M3 7h8M7 3v8" stroke="#0a9a0a" stroke-width="2"/></svg>
<div class="a" style="left:136px;top:720px;width:23px;height:26px;background:#cccccc;border:1px solid #bfbfbf"></div>
<svg style="left:141px;top:726px" width="14" height="14" viewBox="0 0 14 14"><rect x="0.75" y="0.75" width="12.5" height="12.5" rx="3" fill="#dcdcdc" stroke="#aaaaaa" stroke-width="1.4"/><path d="M3 7h8" stroke="#aaaaaa" stroke-width="2"/></svg>
<div class="sel" style="left:164px;top:720px;width:26px;height:26px"></div>
<div class="t" style="left:164px;top:726px;width:26px;text-align:center">[1]</div>
<div class="sep" style="left:29px;top:752px;width:1748px"></div>
<div class="btn" style="left:1689px;top:720px;width:88px;height:26px"></div>
<svg style="left:1701px;top:724px" width="18" height="18" viewBox="0 0 18 18">
<path d="M2.500 16.700h8v-11" fill="none" stroke="#777" stroke-width="1"/>
<path d="M1.600 3.500h8v12.300h-8z" fill="#fff" stroke="#000" stroke-width="1.400"/>
<path d="M3.500 11.500h2.500M3.500 13.500h2M6.500 13.500h2" stroke="#000" stroke-width="1"/>
<circle cx="8.700" cy="6" r="4.600" fill="#00f0f8" stroke="#000" stroke-width="1.100" stroke-dasharray="1.600 1"/>
<rect x="6" y="4.600" width="2.300" height="2.300" fill="#000"/>
<path d="M8.600 3.500v4.500" stroke="#888" stroke-width="0.800"/>
<path d="M11.800 9.300 15.400 12.900" stroke="#000" stroke-width="2.200" stroke-linecap="square"/>
</svg>
<div class="t" style="left:1720px;top:726px">In detail</div>
<div class="a" style="left:29px;top:759px;width:661px;height:235px;background:#fff;border:1px solid #828282"></div>
<div class="a" style="left:30px;top:760px;width:659px;height:37px;background:#f0f0f0"></div>
<div class="a" style="left:30px;top:798px;width:575px;height:18px;background:#dcdcdc"></div>
<div class="a" style="left:30px;top:817px;width:575px;height:18px;background:#f0f0f0"></div>
<div class="a" style="left:30px;top:836px;width:575px;height:18px;background:#f0f0f0"></div>
<div class="a" style="left:30px;top:855px;width:575px;height:18px;background:#f0f0f0"></div>
<div class="a" style="left:30px;top:874px;width:575px;height:18px;background:#f0f0f0"></div>
<div class="a" style="left:606px;top:798px;width:83px;height:18px;background:#666"></div>
<div class="a" style="left:30px;top:797px;width:659px;height:1px;background:#a0a0a0"></div>
<div class="a" style="left:30px;top:816px;width:659px;height:1px;background:#a0a0a0"></div>
<div class="a" style="left:30px;top:835px;width:659px;height:1px;background:#a0a0a0"></div>
<div class="a" style="left:30px;top:854px;width:659px;height:1px;background:#a0a0a0"></div>
<div class="a" style="left:30px;top:873px;width:659px;height:1px;background:#a0a0a0"></div>
<div class="a" style="left:30px;top:892px;width:659px;height:1px;background:#a0a0a0"></div>
<div class="a" style="left:67px;top:760px;width:1px;height:132px;background:#a0a0a0"></div>
<div class="a" style="left:273px;top:760px;width:1px;height:132px;background:#a0a0a0"></div>
<div class="a" style="left:356px;top:760px;width:1px;height:132px;background:#a0a0a0"></div>
<div class="a" style="left:439px;top:760px;width:1px;height:132px;background:#a0a0a0"></div>
<div class="a" style="left:522px;top:779px;width:1px;height:113px;background:#a0a0a0"></div>
<div class="a" style="left:605px;top:760px;width:1px;height:132px;background:#a0a0a0"></div>
<div class="t" style="left:33px;top:763px">No.</div>
<svg style="left:56px;top:767px" width="9" height="6" viewBox="0 0 9 6"><path d="M0.500 5 4.500 1 8.500 5z" fill="#a0a0a0"/></svg>
<div class="t" style="left:67px;top:763px;width:206px;text-align:center;">Force</div>
<div class="t" style="left:273px;top:763px;width:83px;text-align:center;">F<span style="font-size:8.500px;position:relative;top:2.500px">x</span></div>
<div class="t" style="left:356px;top:763px;width:83px;text-align:center;">F<span style="font-size:8.500px;position:relative;top:2.500px">z</span></div>
<div class="t" style="left:439px;top:763px;width:166px;text-align:center;">Applic. point</div>
<div class="t" style="left:605px;top:763px;width:84px;text-align:center;">Coeff.</div>
<div class="t" style="left:273px;top:782px;width:83px;text-align:center;">[kN/m]</div>
<div class="t" style="left:356px;top:782px;width:83px;text-align:center;">[kN/m]</div>
<div class="t" style="left:439px;top:782px;width:83px;text-align:center;">x [m]</div>
<div class="t" style="left:522px;top:782px;width:83px;text-align:center;">z [m]</div>
<div class="t" style="left:605px;top:782px;width:84px;text-align:center;">[–]</div>
<div class="t" style="left:30px;width:37px;text-align:center;top:799px;height:18px;line-height:19px">1</div>
<div class="t" style="left:70.500px;letter-spacing:0.100px;top:799px;height:18px;line-height:19px">Weight - wall</div>
<div class="t" style="left:274px;width:81px;text-align:right;letter-spacing:-0.250px;top:799px;height:18px;line-height:19px">0,00</div>
<div class="t" style="left:357px;width:81px;text-align:right;letter-spacing:-0.250px;top:799px;height:18px;line-height:19px">255,00</div>
<div class="t" style="left:440px;width:81px;text-align:right;letter-spacing:-0.250px;top:799px;height:18px;line-height:19px">1,40</div>
<div class="t" style="left:523px;width:81px;text-align:right;letter-spacing:-0.250px;top:799px;height:18px;line-height:19px">-2,43</div>
<div class="t" style="left:606px;width:82px;text-align:right;letter-spacing:-0.250px;color:#fff;top:799px;height:18px;line-height:19px">1,000</div>
<div class="t" style="left:30px;width:37px;text-align:center;top:818px;height:18px;line-height:19px">2</div>
<div class="t" style="left:70.500px;letter-spacing:0.100px;top:818px;height:18px;line-height:19px">FF resistance</div>
<div class="t" style="left:274px;width:81px;text-align:right;letter-spacing:-0.250px;top:818px;height:18px;line-height:19px">2,19</div>
<div class="t" style="left:357px;width:81px;text-align:right;letter-spacing:-0.250px;top:818px;height:18px;line-height:19px">0,00</div>
<div class="t" style="left:440px;width:81px;text-align:right;letter-spacing:-0.250px;top:818px;height:18px;line-height:19px">0,00</div>
<div class="t" style="left:523px;width:81px;text-align:right;letter-spacing:-0.250px;top:818px;height:18px;line-height:19px">-0,23</div>
<div class="t" style="left:606px;width:82px;text-align:right;letter-spacing:-0.250px;top:818px;height:18px;line-height:19px">1,000</div>
<div class="t" style="left:30px;width:37px;text-align:center;top:837px;height:18px;line-height:19px">3</div>
<div class="t" style="left:70.500px;letter-spacing:0.100px;top:837px;height:18px;line-height:19px">Weight - earth wedge</div>
<div class="t" style="left:274px;width:81px;text-align:right;letter-spacing:-0.250px;top:837px;height:18px;line-height:19px">0,00</div>
<div class="t" style="left:357px;width:81px;text-align:right;letter-spacing:-0.250px;top:837px;height:18px;line-height:19px">40,19</div>
<div class="t" style="left:440px;width:81px;text-align:right;letter-spacing:-0.250px;top:837px;height:18px;line-height:19px">2,18</div>
<div class="t" style="left:523px;width:81px;text-align:right;letter-spacing:-0.250px;top:837px;height:18px;line-height:19px">-3,99</div>
<div class="t" style="left:606px;width:82px;text-align:right;letter-spacing:-0.250px;top:837px;height:18px;line-height:19px">1,000</div>
<div class="t" style="left:30px;width:37px;text-align:center;top:856px;height:18px;line-height:19px">4</div>
<div class="t" style="left:70.500px;letter-spacing:0.100px;top:856px;height:18px;line-height:19px">Active pressure</div>
<div class="t" style="left:274px;width:81px;text-align:right;letter-spacing:-0.250px;top:856px;height:18px;line-height:19px">-137,78</div>
<div class="t" style="left:357px;width:81px;text-align:right;letter-spacing:-0.250px;top:856px;height:18px;line-height:19px">100,14</div>
<div class="t" style="left:440px;width:81px;text-align:right;letter-spacing:-0.250px;top:856px;height:18px;line-height:19px">2,96</div>
<div class="t" style="left:523px;width:81px;text-align:right;letter-spacing:-0.250px;top:856px;height:18px;line-height:19px">-2,19</div>
<div class="t" style="left:606px;width:82px;text-align:right;letter-spacing:-0.250px;top:856px;height:18px;line-height:19px">0,500</div>
<div class="t" style="left:30px;width:37px;text-align:center;top:875px;height:18px;line-height:19px">5</div>
<div class="t" style="left:70.500px;letter-spacing:0.100px;top:875px;height:18px;line-height:19px">Surch.1 - trapez.</div>
<div class="t" style="left:274px;width:81px;text-align:right;letter-spacing:-0.250px;top:875px;height:18px;line-height:19px">-12,27</div>
<div class="t" style="left:357px;width:81px;text-align:right;letter-spacing:-0.250px;top:875px;height:18px;line-height:19px">8,80</div>
<div class="t" style="left:440px;width:81px;text-align:right;letter-spacing:-0.250px;top:875px;height:18px;line-height:19px">2,86</div>
<div class="t" style="left:523px;width:81px;text-align:right;letter-spacing:-0.250px;top:875px;height:18px;line-height:19px">-2,34</div>
<div class="t" style="left:606px;width:82px;text-align:right;letter-spacing:-0.250px;top:875px;height:18px;line-height:19px">1,000</div>
<div class="a" style="left:703px;top:766px;width:10px;height:1px;background:#c0c0c0"></div>
<div class="a" style="left:787px;top:766px;width:164px;height:1px;background:#c0c0c0"></div>
<div class="t b" style="left:717px;top:760px;letter-spacing:-0.050px">Verification</div>
<div class="t b" style="left:703px;top:783px;letter-spacing:-0.250px">OVERTURNING :</div>
<div class="t b" style="left:811px;top:783px;color:#0a8a0a;letter-spacing:-0.450px">SATISFACTORY</div>
<div class="t" style="left:912px;top:783px;letter-spacing:-0.350px">(32,1%)</div>
<div class="t b" style="left:703px;top:801px;letter-spacing:-0.250px">SLIP :</div>
<div class="t b" style="left:811px;top:801px;color:#0a8a0a;letter-spacing:-0.450px">SATISFACTORY</div>
<div class="t" style="left:912px;top:801px;letter-spacing:-0.350px">(48,8%)</div>
<!-- right panel -->
<div class="vstrip" style="left:1789px;top:107px;width:114px;height:20px"></div>
<div class="t" style="left:1792px;top:110px;letter-spacing:-0.450px">Frames</div>
<div class="a" style="left:1889px;top:119px;width:6px;height:2px;background:#000"></div>
<div class="sep" style="left:1793px;top:178px;width:106px"></div>
<div class="sep" style="left:1793px;top:229px;width:106px"></div>
<div class="sep" style="left:1793px;top:302px;width:106px"></div>
<div class="sep" style="left:1793px;top:507px;width:106px"></div>
<svg style="left:1797px;top:134px" width="16" height="16" viewBox="0 0 16 16"><rect x="2.5" y="1.5" width="11" height="13" fill="#fff" stroke="#111"/><path d="M4.500 4.500h7M4.500 6.500h7M4.500 8.500h7M4.500 10.500h7M4.500 12.500h7" stroke="#111" stroke-width="1"/></svg>
<div class="t" style="left:1816px;top:135px;">Project</div>
<svg style="left:1797px;top:156px" width="16" height="16" viewBox="0 0 16 16"><path d="M12.54 6.79L14.90 6.82L14.90 9.18L12.54 9.21L12.07 10.36L13.72 12.04L12.04 13.72L10.36 12.07L9.21 12.54L9.18 14.90L6.82 14.90L6.79 12.54L5.64 12.07L3.96 13.72L2.28 12.04L3.93 10.36L3.46 9.21L1.10 9.18L1.10 6.82L3.46 6.79L3.93 5.64L2.28 3.96L3.96 2.28L5.64 3.93L6.79 3.46L6.82 1.10L9.18 1.10L9.21 3.46L10.36 3.93L12.04 2.28L13.72 3.96L12.07 5.64Z" fill="#111"/><circle cx="8" cy="8" r="2.500" fill="#ffff00"/></svg>
<div class="t" style="left:1816px;top:157px;letter-spacing:-0.05px;">Settings</div>
<svg style="left:1797px;top:185px" width="16" height="16" viewBox="0 0 16 16"><rect x="0.750" y="4.750" width="14" height="6" fill="#a0a0a0" stroke="#111" stroke-width="1.500"/><path d="M3 7.800h10" stroke="#00ffff" stroke-width="1.600" stroke-dasharray="2 1"/></svg>
<div class="t" style="left:1816px;top:186px;">Material</div>
<svg style="left:1797px;top:207px" width="16" height="16" viewBox="0 0 16 16"><path d="M6.500 4.500h4v3.500h0.700v3.600h0.800v3.400h-9.500v-3.400h2v-3.600h2z" fill="#ff00ff" stroke="#111" stroke-width="1"/><path d="M6.500 8h4.700M4.500 11.600h7.500" stroke="#111" stroke-width="1"/></svg>
<div class="t" style="left:1816px;top:208px;">Geometry</div>
<svg style="left:1797px;top:236px" width="16" height="16" viewBox="0 0 16 16"><rect x="2.500" y="1.500" width="10" height="13" fill="#fff" stroke="#111" stroke-width="1.200"/><path d="M2.500 6.500h10M2.500 10.500h10" stroke="#111" stroke-width="1"/></svg>
<div class="t" style="left:1816px;top:237px;">Profile</div>
<svg style="left:1797px;top:258px" width="16" height="16" viewBox="0 0 16 16"><rect x="3.500" y="2.500" width="10" height="13" fill="#555"/><rect x="2.500" y="1.500" width="10" height="13" fill="#ffff00" stroke="#111" stroke-width="1"/><path d="M2.500 6 7 1.500M2.500 9 10 1.500M2.500 12 12.500 2M3 14.500 12.500 5M6 14.500 12.500 8M9 14.500 12.500 11" stroke="#111" stroke-width="1"/></svg>
<div class="t" style="left:1816px;top:259px;">Soils</div>
<svg style="left:1797px;top:280px" width="16" height="16" viewBox="0 0 16 16"><rect x="2.500" y="1.500" width="10" height="13" fill="#00ffff" stroke="#111" stroke-width="1.200"/><rect x="3" y="2" width="9" height="4" fill="#008080"/><rect x="3" y="6" width="9" height="4.500" fill="#ffff00"/><path d="M4 3.500h2M7 3h2M10 3.500h1.500M4 8h1.500v1.500M7 7.500h2v2h-2zM10 8h1.500M4 12l2 1.500M7 11.500l2 1.500M10 12l1.500 1" stroke="#111" stroke-width="0.900" fill="none"/></svg>
<div class="t" style="left:1816px;top:281px;">Assign</div>
<svg style="left:1797px;top:309px" width="16" height="16" viewBox="0 0 16 16"><path d="M6.200 5.500h4.600l2.700 4.500h-10z" fill="#fff" stroke="#111" stroke-width="1"/><path d="M7.400 1v4.500M10 1v4.500" stroke="#111" stroke-width="1.200"/><rect x="2.500" y="10" width="11.200" height="3.700" fill="#ff00ff" stroke="#111" stroke-width="1"/></svg>
<div class="t" style="left:1816px;top:310px;letter-spacing:0.12px;">Foundation</div>
<svg style="left:1797px;top:331px" width="16" height="16" viewBox="0 0 16 16"><path d="M3.700 5.200Q8 2.600 14.700 2.200L3.700 13.700z" fill="#ff80ff"/><path d="M3.700 5.200Q8 2.600 14.700 2.200" fill="none" stroke="#600030" stroke-width="1.200"/><path d="M14.700 2.200 3.700 13.700" stroke="#ff40ff" stroke-width="0.800"/><rect x="0.600" y="5.400" width="3" height="8.300" fill="#808080" stroke="#111" stroke-width="1.200"/></svg>
<div class="t" style="left:1816px;top:332px;">Backfill</div>
<svg style="left:1797px;top:353px" width="16" height="16" viewBox="0 0 16 16"><rect x="0.600" y="5.600" width="3" height="8" fill="#808080" stroke="#111" stroke-width="1.200"/><path d="M4 6 8.600 3.200H15" fill="none" stroke="#800000" stroke-width="1.500"/></svg>
<div class="t" style="left:1816px;top:354px;letter-spacing:-0.22px;">Terrain</div>
<svg style="left:1797px;top:375px" width="16" height="16" viewBox="0 0 16 16"><rect x="4" y="7" width="11" height="7.700" fill="#00ffff"/><path d="M4 3.400H15" stroke="#800000" stroke-width="1.300"/><path d="M5 6.500H15" stroke="#0000ff" stroke-width="1.300" stroke-dasharray="2.500 1"/><rect x="0.600" y="3.600" width="3" height="11" fill="#808080" stroke="#111" stroke-width="1.200"/></svg>
<div class="t" style="left:1816px;top:376px;">Water</div>
<svg style="left:1797px;top:397px" width="16" height="16" viewBox="0 0 16 16"><path d="M3.500 4.600V1H5v1h1.500V1H8v1h1.500V1H11v1h1.500V1H14v3.600z" fill="#0000ff"/><path d="M4 5H15" stroke="#800000" stroke-width="1.300"/><rect x="0.600" y="4.600" width="3" height="9" fill="#808080" stroke="#111" stroke-width="1.200"/></svg>
<div class="t" style="left:1816px;top:398px;letter-spacing:-0.25px;">Surcharge</div>
<svg style="left:1797px;top:419px" width="16" height="16" viewBox="0 0 16 16"><rect x="11.600" y="4.600" width="3" height="7.600" fill="#808080" stroke="#111" stroke-width="1.200"/><path d="M1 12.400H15" stroke="#800000" stroke-width="1.400"/><path d="M5.500 4.400V9" stroke="#0000ff" stroke-width="1.500"/><path d="M2.800 8h5.400l-2.700 3z" fill="#0000ff"/></svg>
<div class="t" style="left:1816px;top:420px;letter-spacing:-0.43px;">FF resistance</div>
<svg style="left:1797px;top:441px" width="16" height="16" viewBox="0 0 16 16"><path d="M9.200 0.300V7" stroke="#0000ff" stroke-width="1.600"/><path d="M6 6.300h6.400l-3.200 3.600z" fill="#0000ff"/><path d="M14 12.200H5" stroke="#0000ff" stroke-width="1.600"/><path d="M5.800 9v6.400l-3.900-3.200z" fill="#0000ff"/></svg>
<div class="t" style="left:1816px;top:442px;">Applied forces</div>
<svg style="left:1797px;top:463px" width="16" height="16" viewBox="0 0 16 16"><rect x="5.600" y="1.400" width="3.600" height="7" fill="#808080" stroke="#111" stroke-width="1"/><path d="M1.200 8.800H14.200" stroke="#111" stroke-width="1.300"/><path d="M2 9.800l4.500 4.500M6.500 9.800l-4.500 4.500M7 9.800l2.200 2.200" stroke="#111" stroke-width="1.100" fill="none"/><path d="M9.200 12l2.300 2.300M11.500 9.800l-4.500 4.500M10 9.800l4.500 4.500M14.500 9.800l-4.500 4.500M2 14.500h4" stroke="#00c000" stroke-width="1.100" fill="none"/></svg>
<div class="t" style="left:1816px;top:464px;letter-spacing:-0.22px;">Earthquake</div>
<svg style="left:1797px;top:485px" width="16" height="16" viewBox="0 0 16 16"><rect x="0.700" y="7.200" width="6.600" height="7.200" fill="#ffff00" stroke="#111" stroke-width="1.300"/><rect x="7" y="0.700" width="7" height="8.200" fill="#ffff00" stroke="#111" stroke-width="1.300"/><text x="2" y="13.700" font-size="8" font-weight="bold" font-family="Liberation Sans,sans-serif">1</text><text x="8.400" y="7.800" font-size="8.500" font-weight="bold" font-family="Liberation Sans,sans-serif">2</text></svg>
<div class="t" style="left:1816px;top:486px;letter-spacing:-0.25px;">Stage settings</div>
<div class="sel" style="left:1793px;top:511px;width:106px;height:22px"></div>
<svg style="left:1797px;top:514px" width="16" height="16" viewBox="0 0 16 16"><path d="M3 7.500A4.800 4.800 0 0 1 12.400 7" fill="none" stroke="#111" stroke-width="2.800"/><path d="M3 7.500A4.800 4.800 0 0 1 12.400 7" fill="none" stroke="#ff0000" stroke-width="1.500"/><path d="M10.300 6.200h4.400l-2 2.800z" fill="#ff0000" stroke="#111" stroke-width="0.600"/><rect x="3.100" y="9.700" width="3.400" height="5" fill="#ffff00" stroke="#111" stroke-width="1"/><path d="M15 11.600H10" stroke="#ff0000" stroke-width="1.500"/><path d="M11 8.800v5.600l-3.200-2.800z" fill="#ff0000"/></svg>
<div class="t" style="left:1816px;top:515px;letter-spacing:-0.14px;">Verification</div>
<svg style="left:1797px;top:536px" width="16" height="16" viewBox="0 0 16 16"><path d="M2.500 8.200h10.400v4.300l-1.300-1.300-1.300 1.300-1.300-1.300-1.300 1.300-1.300-1.300-1.300 1.300-1.300-1.300-1.300 1.300z" fill="#ff0000"/><rect x="2.500" y="5" width="10.400" height="3.300" fill="#ffff00" stroke="#111" stroke-width="1"/></svg>
<div class="t" style="left:1816px;top:537px;letter-spacing:-0.12px;">Bearing cap.</div>
<svg style="left:1797px;top:558px" width="16" height="16" viewBox="0 0 16 16"><path d="M7 2.500h3.800v11.200h-6.600v-5.500l2.800-2.800z" fill="#ffff00" stroke="#111" stroke-width="1.200"/><path d="M6 8.200h4.800" stroke="#ff0000" stroke-width="1.400"/></svg>
<div class="t" style="left:1816px;top:559px;letter-spacing:0.15px;">Dimensioning</div>
<svg style="left:1797px;top:580px" width="16" height="16" viewBox="0 0 16 16"><path d="M1.200 9.200C2 13 5 14.800 8 14.200C12 13.300 14 9 14.900 3" fill="none" stroke="#ff0000" stroke-width="1.700"/><path d="M9 2.700h6" stroke="#800000" stroke-width="1.400"/><path d="M1.200 9.200h5" stroke="#111" stroke-width="1.200"/><rect x="6" y="3.500" width="3.200" height="5.700" fill="#ffff00" stroke="#111" stroke-width="1.100"/></svg>
<div class="t" style="left:1816px;top:581px;">Stability</div>
<div class="vstrip" style="left:1789px;top:808px;width:114px;height:20px"></div>
<div class="t" style="left:1792px;top:811px;letter-spacing:0.250px">Outputs</div>
<div class="a" style="left:1889px;top:820px;width:6px;height:2px;background:#000"></div>
<div class="btn" style="left:1793px;top:832px;width:106px;height:22px"></div>
<svg style="left:1797px;top:835px" width="16" height="16" viewBox="0 0 16 16"><rect x="0.500" y="0.500" width="15" height="15" fill="#e8e8e8" stroke="#555"/><path d="M4.500 3.500v9h7M4.500 6.500h3v3h-3M7.500 9.500h2v3" fill="none" stroke="#111" stroke-width="1"/><path d="M9.500 4.500h5M12 2v5" stroke="#00a000" stroke-width="1.800"/></svg>
<div class="t" style="left:1816px;top:836px;letter-spacing:0.200px">Add picture</div>
<div class="t" style="left:1793px;top:858px">Verification&nbsp;&nbsp;:</div>
<div class="t" style="left:1880px;top:858px;width:19px;text-align:right">0</div>
<div class="t" style="left:1793px;top:876px">Total :</div>
<div class="t" style="left:1880px;top:876px;width:19px;text-align:right">0</div>
<div class="btn" style="left:1793px;top:893px;width:106px;height:22px"></div>
<svg style="left:1797px;top:896px" width="16" height="16" viewBox="0 0 16 16"><rect x="0.500" y="0.500" width="15" height="15" fill="#e8e8e8" stroke="#555"/><path d="M4.500 3.500v9h7M4.500 6.500h3v3h-3M7.500 9.500h2v3" fill="none" stroke="#111" stroke-width="1"/><path d="M9 3.500h5.500M9 5.500h5.500M9 7.500h5.500" stroke="#111" stroke-width="1" stroke-dasharray="1.500 0.800"/></svg>
<div class="t" style="left:1816px;top:897px">List of pictures</div>
<div class="sep" style="left:1793px;top:921px;width:106px"></div>
<div class="btn" style="left:1793px;top:928px;width:51px;height:42px"></div>
<div class="btn" style="left:1849px;top:928px;width:50px;height:42px"></div>
<svg style="left:1807px;top:935px" width="24" height="30" viewBox="0 0 24 30"><path d="M2.600 7.300V3.600Q2.600 2.900 3.300 2.900H4.700V7.300M19.300 7.300V2.900H20.700Q21.400 2.900 21.400 3.600V7.300" fill="#c8ae86" stroke="#111" stroke-width="1"/>
<rect x="4.700" y="0.400" width="14.600" height="6.900" rx="0.800" fill="#fff" stroke="#111" stroke-width="1.100"/>
<rect x="0.700" y="7.300" width="22.600" height="11" rx="1.400" fill="#c8ae86" stroke="#111" stroke-width="1.100"/>
<rect x="2" y="8.500" width="1" height="1" fill="#111"/><rect x="20" y="8.500" width="2" height="1" fill="#111"/>
<rect x="3.400" y="12.200" width="17.200" height="3.300" fill="#222"/>
<path d="M5 13.500h14" stroke="#999" stroke-width="1" stroke-dasharray="2 1.500"/>
<path d="M4.700 15.500V28.400H19.300V15.500" fill="#fff" stroke="#111" stroke-width="1.100" stroke-linejoin="round"/><path d="M6.500 18.500h11.500M6.500 20.500h11.500M9 22.500h9M9 24.500h9" stroke="#111" stroke-width="1" shape-rendering="crispEdges"/><path d="M6.500 22.500h1M6.500 24.500h2M11 26.500h1M13 26.500h2M16 26.500h2" stroke="#111" stroke-width="1" shape-rendering="crispEdges"/></svg>
<svg style="left:1862px;top:935px" width="24" height="30" viewBox="0 0 24 30"><path d="M2.600 7.300V3.600Q2.600 2.900 3.300 2.900H4.700V7.300M19.300 7.300V2.900H20.700Q21.400 2.900 21.400 3.600V7.300" fill="#c8ae86" stroke="#111" stroke-width="1"/>
<rect x="4.700" y="0.400" width="14.600" height="6.900" rx="0.800" fill="#fff" stroke="#111" stroke-width="1.100"/>
<rect x="0.700" y="7.300" width="22.600" height="11" rx="1.400" fill="#c8ae86" stroke="#111" stroke-width="1.100"/>
<rect x="2" y="8.500" width="1" height="1" fill="#111"/><rect x="20" y="8.500" width="2" height="1" fill="#111"/>
<rect x="3.400" y="12.200" width="17.200" height="3.300" fill="#222"/>
<path d="M5 13.500h14" stroke="#999" stroke-width="1" stroke-dasharray="2 1.500"/>
<path d="M4.700 15.500V28.400H19.300V15.500" fill="#fff" stroke="#111" stroke-width="1.100" stroke-linejoin="round"/><path d="M7.800 18.500h-1.300v8h1.300" stroke="#f00" stroke-width="1.100" fill="none"/><path d="M9.500 18.500h7v8h-2v-2h-1.500v-2h-1.500v-2h-2z" fill="#fff" stroke="#f00" stroke-width="1.100" stroke-linejoin="round"/><path d="M11.500 20.500h5M13 22.500h3.500M14.500 24.500h2" stroke="#f00" stroke-width="1"/></svg>
<div class="btn" style="left:1793px;top:973px;width:106px;height:22px"></div>
<svg style="left:1797px;top:976px" width="17" height="17" viewBox="0 0 17 17"><rect x="0.500" y="0.500" width="8" height="10" fill="#ececec" stroke="#555"/><path d="M3 2.500v6h4.500v-2.500h-4.500M3 4.500h2.500v1.500" fill="none" stroke="#111" stroke-width="1"/><path d="M10.100 5h2.600v2.500" stroke="#0a9a0a" stroke-width="1.300" fill="none"/><path d="M10.900 7h3.600l-1.800 2z" fill="#0a9a0a"/><rect x="9.800" y="10.700" width="5.600" height="4.400" fill="#fff" stroke="#111" stroke-width="1.200"/><path d="M11.500 12h2.200" stroke="#111" stroke-width="1.200"/></svg>
<div class="t" style="left:1816px;top:977px">Copy view</div>
<svg style="left:0;top:0" width="1907" height="1028" viewBox="0 0 1907 1028"><rect x="1902" y="1017" width="2" height="2" fill="#bcbcbc"/><rect x="1899" y="1020" width="2" height="2" fill="#bcbcbc"/><rect x="1902" y="1020" width="2" height="2" fill="#bcbcbc"/><rect x="1896" y="1023" width="2" height="2" fill="#bcbcbc"/><rect x="1899" y="1023" width="2" height="2" fill="#bcbcbc"/><rect x="1902" y="1023" width="2" height="2" fill="#bcbcbc"/></svg>
</body>
</html>
